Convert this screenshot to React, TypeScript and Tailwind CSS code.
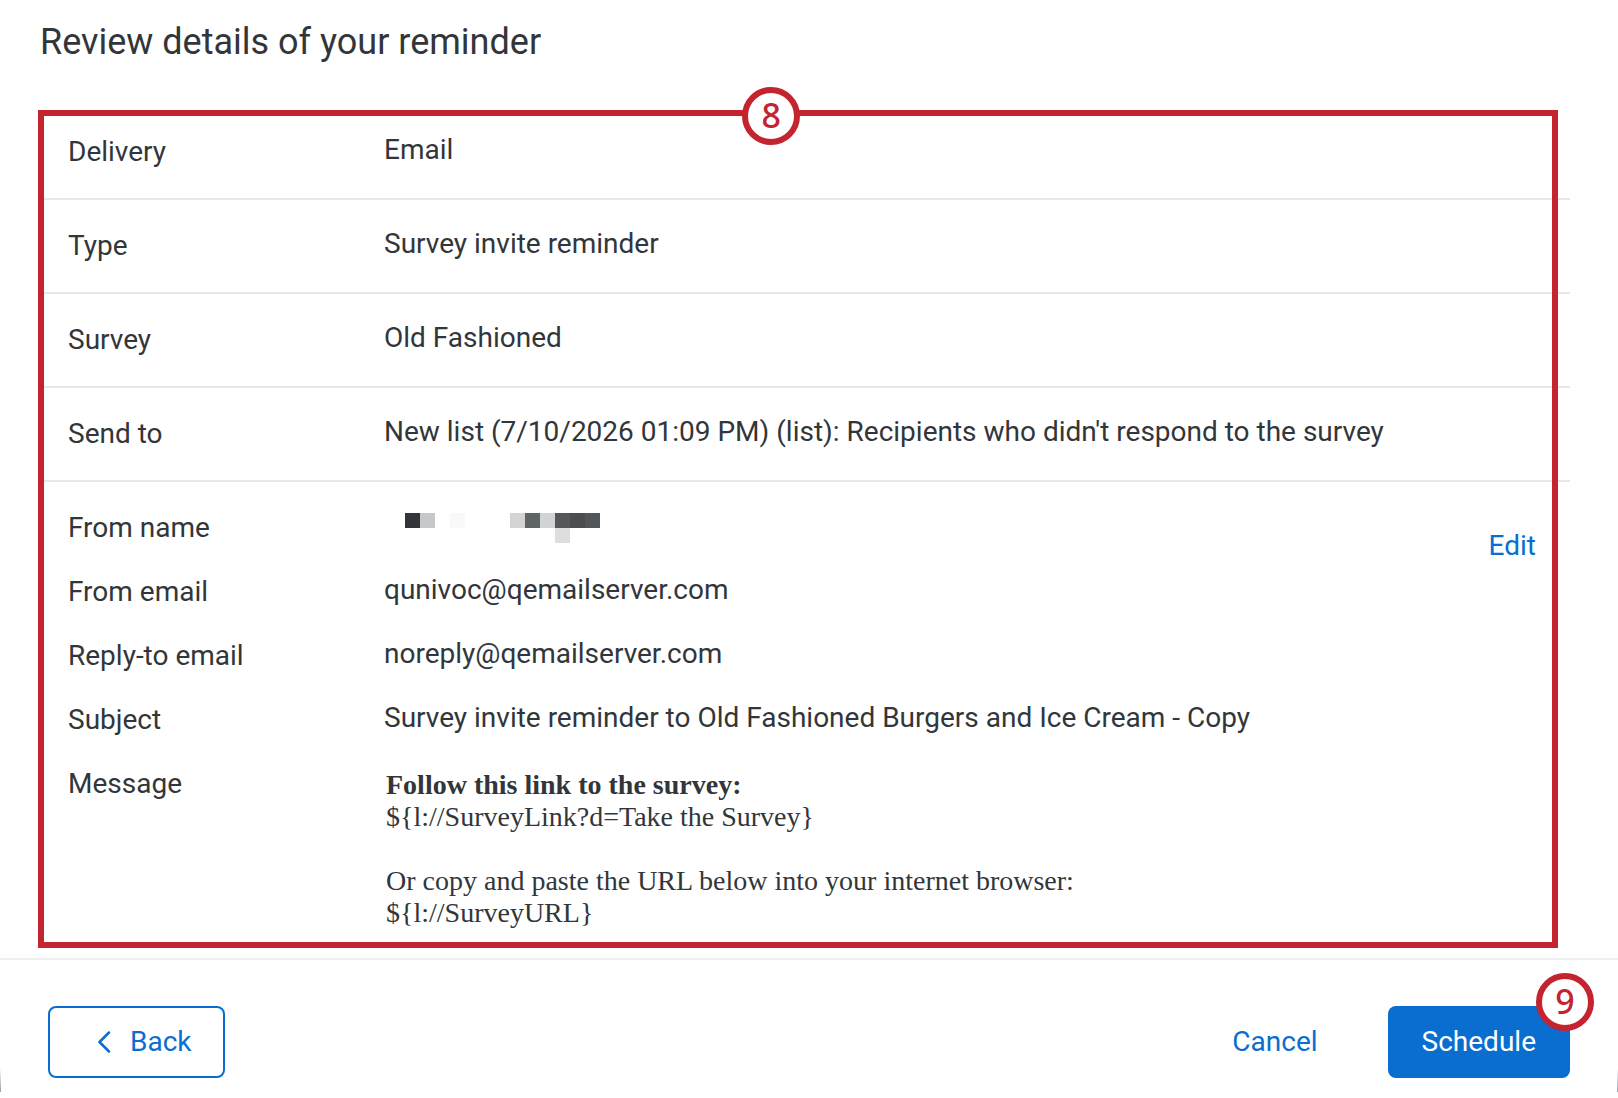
import { ReactNode } from "react";

const summary = [
  { label: "Delivery", value: "Email" },
  { label: "Type", value: "Survey invite reminder" },
  { label: "Survey", value: "Old Fashioned" },
  {
    label: "Send to",
    value: "New list (7/10/2026 01:09 PM) (list): Recipients who didn't respond to the survey",
  },
];

// Each cell is one 15px block of the hidden sender name
const mosaic = [
  { x: 0, y: 0, fill: "#32353a" },
  { x: 15, y: 0, fill: "#c6c7c9" },
  { x: 45, y: 0, fill: "#f9f9f9" },
  { x: 105, y: 0, fill: "#d4d4d4" },
  { x: 120, y: 0, fill: "#5f6467" },
  { x: 135, y: 0, fill: "#d2d3d5" },
  { x: 150, y: 0, fill: "#54585b" },
  { x: 165, y: 0, fill: "#4a4e50" },
  { x: 180, y: 0, fill: "#525659" },
  { x: 150, y: 15, fill: "#dddfde" },
];

interface FieldProps {
  label: string;
  children: ReactNode;
}

function Field({ label, children }: FieldProps) {
  return (
    <div className="grid grid-cols-[340px_1fr]">
      <dt className="pl-6 pt-0.5">{label}</dt>
      <dd>{children}</dd>
    </div>
  );
}

function StepBadge({ step }: { step: number }) {
  return (
    <span className="flex size-[58px] items-center justify-center rounded-full border-6 border-[#c3242f] bg-white pb-0.5 font-['Noto_Sans',sans-serif] text-[34px] leading-none font-medium text-[#c3242f]">
      {step}
    </span>
  );
}

function HiddenName() {
  return (
    <svg className="mt-[3px] ml-[21px]" width="195" height="30" shapeRendering="crispEdges" aria-hidden="true">
      {mosaic.map((cell) => (
        <rect key={`${cell.x}-${cell.y}`} x={cell.x} y={cell.y} width="15" height="15" fill={cell.fill} />
      ))}
    </svg>
  );
}

export default function App() {
  return (
    <div className="relative flex min-h-screen flex-col bg-white font-['Roboto',sans-serif] text-[28px] leading-8 text-[#32363a]">
      <header className="px-10 pt-5 pb-[42px]">
        <h1 className="text-4xl leading-[44px]">Review details of your reminder</h1>
      </header>

      <main className="relative mr-12 ml-[38px] pl-1.5">
        <dl>
          {summary.map((row) => (
            <div key={row.label} className="border-b-2 border-[#e8e8e8] pt-7 pb-[30px]">
              <Field label={row.label}>{row.value}</Field>
            </div>
          ))}
        </dl>

        {/* Email details */}
        <div className="flex items-start justify-between pt-7 pb-[29px]">
          <dl className="flex flex-col gap-[30px]">
            <Field label="From name">
              <HiddenName />
            </Field>
            <Field label="From email">qunivoc@qemailserver.com</Field>
            <Field label="Reply-to email">noreply@qemailserver.com</Field>
            <Field label="Subject">Survey invite reminder to Old Fashioned Burgers and Ice Cream - Copy</Field>
            <Field label="Message">
              <div className="pt-[3px] pl-0.5 font-['Liberation_Serif',serif]">
                <p className="font-bold">Follow this link to the survey:</p>
                <p>{"${l://SurveyLink?d=Take the Survey}"}</p>
                <p className="mt-8">Or copy and paste the URL below into your internet browser:</p>
                <p>{"${l://SurveyURL}"}</p>
              </div>
            </Field>
          </dl>
          <button type="button" className="mt-5 mr-[34px] text-[#0a6ed1]">
            Edit
          </button>
        </div>

        {/* Callout frame */}
        <div className="pointer-events-none absolute top-1 right-3 bottom-2.5 left-0 border-6 border-[#c3242f]">
          <div className="absolute -top-[29px] left-[46.3%]">
            <StepBadge step={8} />
          </div>
        </div>
      </main>

      <footer className="flex items-center justify-between border-t-2 border-[#eeeeee] px-12 pt-[46px] pb-5">
        <button
          type="button"
          className="flex h-[72px] items-center gap-[19px] rounded-lg border-2 border-[#0a6ed1] pr-[31px] pl-[47px] text-[#0a6ed1]"
        >
          <svg width="14" height="22" viewBox="0 0 14 22" fill="none" stroke="currentColor" strokeWidth="2.5" strokeLinecap="round" strokeLinejoin="round" aria-hidden="true">
            <path d="M12 1.5 L2.5 11 L12 20.5" />
          </svg>
          Back
        </button>
        <div className="flex items-center gap-[70px]">
          <button type="button" className="text-[#0a6ed1]">
            Cancel
          </button>
          <div className="relative">
            <button type="button" className="h-[72px] rounded-lg bg-[#0a6ed1] px-[34px] text-white">
              Schedule
            </button>
            <div className="pointer-events-none absolute -top-[33px] -right-6">
              <StepBadge step={9} />
            </div>
          </div>
        </div>
      </footer>

      {/* Dialog edge shadow */}
      <span className="absolute bottom-1.5 left-0 h-6 w-px bg-linear-to-b from-transparent to-gray-400" />
      <span className="absolute right-0 bottom-1.5 h-6 w-px bg-linear-to-b from-transparent to-gray-400" />
    </div>
  );
}
